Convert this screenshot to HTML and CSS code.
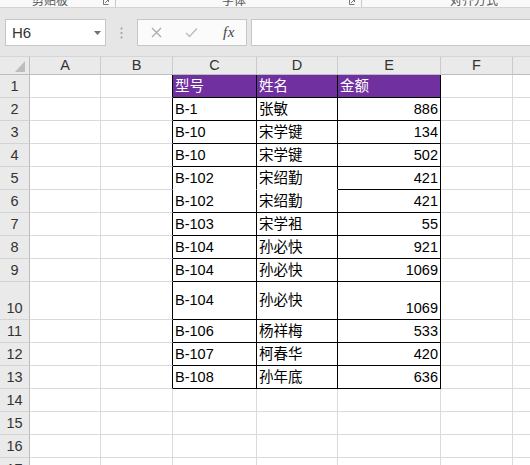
FILE: index.html
```html
<!DOCTYPE html>
<html lang="zh-CN">
<head>
<meta charset="utf-8">
<title>Sheet</title>
<link rel="stylesheet" href="styles.css">
</head>
<body>
<div class="ribbon">
  <div class="grp g1"><span class="lbl">剪贴板</span><span class="launch"><svg width="6" height="6" viewBox="0 0 6 6"><path d="M0.5 0.5V5.5H5.5M2 4L5.5 0.5M3 0.5H5.5V3" fill="none" stroke="#777" stroke-width="1"/></svg></span></div>
  <div class="grp g2"><span class="lbl">字体</span><span class="launch"><svg width="6" height="6" viewBox="0 0 6 6"><path d="M0.5 0.5V5.5H5.5M2 4L5.5 0.5M3 0.5H5.5V3" fill="none" stroke="#777" stroke-width="1"/></svg></span></div>
  <div class="grp g3"><span class="lbl">对齐方式</span></div>
</div>
<div class="toolbar">
  <div class="namebox"><span>H6</span><svg width="7" height="4" viewBox="0 0 7 4"><path d="M0 0H7L3.5 4Z" fill="#6f6f6f"/></svg></div>
  <div class="grip"><svg width="3" height="12" viewBox="0 0 3 12"><circle cx="1.5" cy="1.5" r="1" fill="#9a9a9a"/><circle cx="1.5" cy="6" r="1" fill="#9a9a9a"/><circle cx="1.5" cy="10.5" r="1" fill="#9a9a9a"/></svg></div>
  <div class="fxbox">
    <svg class="ic-x" width="11" height="11" viewBox="0 0 11 11"><path d="M1 1L10 10M10 1L1 10" stroke="#ababab" stroke-width="1.3" fill="none"/></svg>
    <svg class="ic-ok" width="13" height="11" viewBox="0 0 13 11"><path d="M1 6L4.5 9.5L12 1.5" stroke="#bcbcbc" stroke-width="1.4" fill="none"/></svg>
    <span class="fx">fx</span>
  </div>
  <div class="formula"></div>
</div>
<div class="sheet">
  <div class="corner"><svg width="10" height="11" viewBox="0 0 10 11"><path d="M10 0V11H0Z" fill="#bdbdbd"/></svg></div>
  <div class="h">A</div><div class="h">B</div><div class="h">C</div><div class="h">D</div><div class="h">E</div><div class="h">F</div><div class="h g"></div>

  <div class="r">1</div><div></div><div class="b"></div><div class="d hd">型号</div><div class="d hd">姓名</div><div class="d hd">金额</div><div></div><div class="g"></div>
  <div class="r">2</div><div></div><div class="b"></div><div class="d">B-1</div><div class="d">张敏</div><div class="d n">886</div><div></div><div class="g"></div>
  <div class="r">3</div><div></div><div class="b"></div><div class="d">B-10</div><div class="d">宋学键</div><div class="d n">134</div><div></div><div class="g"></div>
  <div class="r">4</div><div></div><div class="b"></div><div class="d">B-10</div><div class="d">宋学键</div><div class="d n">502</div><div></div><div class="g"></div>
  <div class="r">5</div><div></div><div class="b"></div><div class="d nb">B-102</div><div class="d nb">宋绍勤</div><div class="d n">421</div><div></div><div class="g"></div>
  <div class="r">6</div><div></div><div class="b"></div><div class="d">B-102</div><div class="d">宋绍勤</div><div class="d n">421</div><div></div><div class="g"></div>
  <div class="r">7</div><div></div><div class="b"></div><div class="d">B-103</div><div class="d">宋学袓</div><div class="d n">55</div><div></div><div class="g"></div>
  <div class="r">8</div><div></div><div class="b"></div><div class="d">B-104</div><div class="d">孙必快</div><div class="d n">921</div><div></div><div class="g"></div>
  <div class="r">9</div><div></div><div class="b"></div><div class="d">B-104</div><div class="d">孙必快</div><div class="d n">1069</div><div></div><div class="g"></div>
  <div class="r">10</div><div></div><div class="b"></div><div class="d mid">B-104</div><div class="d mid">孙必快</div><div class="d n">1069</div><div></div><div class="g"></div>
  <div class="r">11</div><div></div><div class="b"></div><div class="d">B-106</div><div class="d">杨祥梅</div><div class="d n">533</div><div></div><div class="g"></div>
  <div class="r">12</div><div></div><div class="b"></div><div class="d">B-107</div><div class="d">柯春华</div><div class="d n">420</div><div></div><div class="g"></div>
  <div class="r">13</div><div></div><div class="b"></div><div class="d">B-108</div><div class="d">孙年底</div><div class="d n">636</div><div></div><div class="g"></div>
  <div class="r">14</div><div></div><div></div><div></div><div></div><div></div><div></div><div class="g"></div>
  <div class="r">15</div><div></div><div></div><div></div><div></div><div></div><div></div><div class="g"></div>
  <div class="r">16</div><div></div><div></div><div></div><div></div><div></div><div></div><div class="g"></div>
  <div class="r">17</div><div></div><div></div><div></div><div></div><div></div><div></div><div class="g"></div>
</div>
</body>
</html>
```
FILE: styles.css
```css
html, body {
  margin: 0;
  padding: 0;
}
body {
  width: 530px;
  height: 465px;
  overflow: hidden;
  background: #e6e6e6;
  font-family: "Liberation Sans", "Noto Sans CJK SC", sans-serif;
}

/* ribbon strip (bottom of the ribbon, cut off) */
.ribbon {
  height: 7px;
  background: #f9f9f9;
  border-bottom: 1px solid #d4d4d4;
  display: flex;
  overflow: hidden;
}
.grp {
  box-sizing: border-box;
  height: 7px;
  display: flex;
  align-items: flex-end;
  border-right: 1px solid #cacaca;
}
.g1 { width: 116px; }
.g2 { width: 246px; }
.g3 { flex: 1; border-right: none; }
.g1 .lbl { margin-left: 32px; }
.g2 .lbl { margin-left: 106px; }
.g3 .lbl { margin-left: 88px; }
.lbl {
  font-family: "Noto Sans CJK SC", sans-serif;
  font-size: 12px;
  line-height: 14px;
  color: #555;
  white-space: nowrap;
}
.launch {
  margin-left: auto;
  margin-right: 6px;
  height: 7px;
  display: flex;
  align-items: flex-start;
}
.launch svg { display: block; margin-top: -1px; }

/* formula bar */
.toolbar {
  height: 48px;
  box-sizing: border-box;
  padding: 11px 0 0 5px;
  display: flex;
  align-items: flex-start;
}
.namebox {
  width: 101px;
  height: 27px;
  box-sizing: border-box;
  border: 1px solid #c6c6c6;
  background: #fff;
  display: flex;
  align-items: center;
  justify-content: space-between;
  padding: 0 4px 0 6px;
  font-size: 15px;
  color: #333;
}
.namebox svg { display: block; }
.grip {
  width: 31px;
  height: 27px;
  display: flex;
  align-items: center;
  justify-content: center;
}
.grip svg { display: block; }
.fxbox {
  width: 110px;
  height: 27px;
  box-sizing: border-box;
  border: 1px solid #c6c6c6;
  background: #fbfbfb;
  display: flex;
  align-items: center;
  padding-left: 13px;
}
.fxbox svg { display: block; }
.ic-ok { margin-left: 23px; }
.fx {
  margin-left: 25px;
  font-family: "Liberation Serif", serif;
  font-style: italic;
  font-size: 15px;
  color: #444;
  letter-spacing: 0.5px;
}
.formula {
  flex: 1;
  height: 27px;
  margin-left: 4px;
  box-sizing: border-box;
  border: 1px solid #c6c6c6;
  border-right: none;
  background: #fff;
}

/* sheet grid */
.sheet {
  display: grid;
  grid-template-columns: 30px 71px 72px 84px 81px 103px 72px 1fr;
  grid-template-rows: 18px repeat(9, 23px) 38px repeat(7, 23px);
  border-top: 1px solid #d6d6d6;
  background: #fff;
}
.sheet > div {
  box-sizing: border-box;
  border-right: 1px solid #dadada;
  border-bottom: 1px solid #dadada;
  background: #fff;
  font-size: 14.5px;
  line-height: 17px;
  color: #000;
  display: flex;
  align-items: flex-end;
  padding: 0 2px 2px 2px;
  white-space: nowrap;
  overflow: hidden;
}
.sheet > .g { border-right: none; }

.sheet > .corner {
  background: #eaeaea;
  border-right-color: #bdbdbd;
  border-bottom-color: #bdbdbd;
  justify-content: flex-end;
  padding: 0 4px 2px 0;
}
.corner svg { display: block; }
.sheet > .h {
  background: #eaeaea;
  border-right-color: #cbcbcb;
  border-bottom-color: #bdbdbd;
  justify-content: center;
  align-items: center;
  padding: 0;
  font-size: 14.5px;
  color: #333;
}
.sheet > .r {
  background: #eaeaea;
  border-right-color: #bdbdbd;
  border-bottom-color: #d3d3d3;
  justify-content: center;
  padding: 0 0 2px 0;
  font-size: 14.5px;
  color: #333;
}

.sheet > .b { border-right-color: #000; }
.sheet > .d {
  border-right-color: #000;
  border-bottom-color: #000;
}
.sheet > .hd {
  background: #7030a0;
  color: #fff;
}
.sheet > .n { justify-content: flex-end; }
.sheet > .nb { border-bottom-color: #fff; }
.sheet > .mid { align-items: center; padding-bottom: 0; }
```
